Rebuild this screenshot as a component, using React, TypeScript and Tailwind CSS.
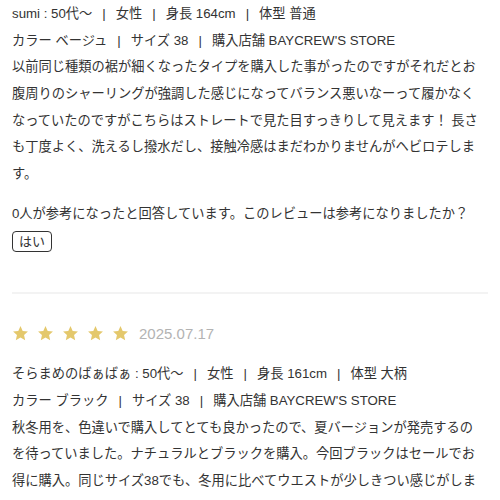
import React from "react";

const Sep = () => <span className="mx-[10px]">|</span>;

const Star = () => (
  <svg width="17" height="17" viewBox="0 0 24 24" className="shrink-0">
    <path
      d="M12 1.5l3.1 6.9 7.4.8-5.5 5 1.6 7.4L12 17.8l-6.6 3.8 1.6-7.4-5.5-5 7.4-.8z"
      fill="#e4c86c"
    />
  </svg>
);

export default function App() {
  return (
    <div
      className="w-[500px] h-[500px] overflow-hidden bg-white text-[#333] px-[12px]"
      style={{ fontFamily: '"Liberation Sans", "Noto Sans CJK JP", sans-serif' }}
    >
      <div className="pt-[1px] text-[13.25px] leading-[26.67px] whitespace-nowrap">
        <div>
          sumi : 50代〜<Sep />女性<Sep />身長 164cm<Sep />体型 普通
        </div>
        <div>
          カラー ベージュ<Sep />サイズ 38<Sep />購入店舗 BAYCREW'S STORE
        </div>
        <div>
          以前同じ種類の裾が細くなったタイプを購入した事がったのですがそれだとお
          <br />
          腹周りのシャーリングが強調した感じになってバランス悪いなーって履かなく
          <br />
          なっていたのですがこちらはストレートで見た目すっきりして見えます！ 長さ
          <br />
          も丁度よく、洗えるし撥水だし、接触冷感はまだわかりませんがヘビロテしま
          <br />
          す。
        </div>
      </div>
      <p className="mt-[13px] text-[13.25px] leading-[26.67px] whitespace-nowrap">
        0人が参考になったと回答しています。このレビューは参考になりましたか？
      </p>
      <button className="mt-[4px] h-[21px] w-[40px] flex items-center justify-center border-[1.5px] border-[#333] rounded-[4px] text-[13px] leading-none text-[#333] bg-white">
        はい
      </button>
      <div className="mt-[40px] h-[2px] bg-[#f3f3f3]" />
      <div className="mt-[31px] flex items-center h-[17px]">
        <div className="flex gap-[8px]">
          <Star />
          <Star />
          <Star />
          <Star />
          <Star />
        </div>
        <span className="ml-[10px] text-[15px] leading-none text-[#b3b3b3]">2025.07.17</span>
      </div>
      <div className="mt-[19px] text-[13.25px] leading-[26.67px] whitespace-nowrap">
        <div>
          そらまめのばぁばぁ : 50代〜<Sep />女性<Sep />身長 161cm<Sep />体型 大柄
        </div>
        <div>
          カラー ブラック<Sep />サイズ 38<Sep />購入店舗 BAYCREW'S STORE
        </div>
        <div>
          秋冬用を、色違いで購入してとても良かったので、夏バージョンが発売するの
          <br />
          を待っていました。ナチュラルとブラックを購入。今回ブラックはセールでお
          <br />
          得に購入。同じサイズ38でも、冬用に比べてウエストが少しきつい感じがしま
          <br />
          した。
        </div>
      </div>
    </div>
  );
}
